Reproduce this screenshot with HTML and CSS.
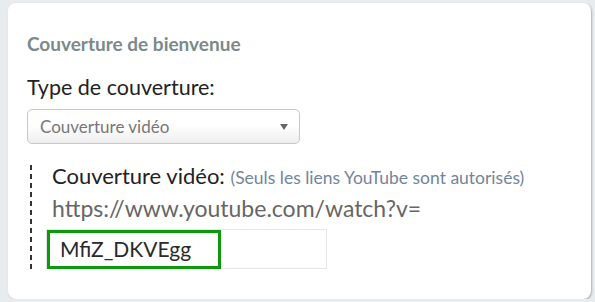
FILE: index.html
```html
<!DOCTYPE html>
<html lang="fr">
<head>
<meta charset="utf-8">
<link rel="stylesheet" href="styles.css">
</head>
<body>
<div class="card">
  <h3 class="card-title">Couverture de bienvenue</h3>
  <label class="field-label">Type de couverture:</label>
  <div class="select">
    <span class="select-value">Couverture vidéo</span>
    <span class="select-arrow"></span>
  </div>
  <div class="video-section">
    <div class="video-label">Couverture vidéo: <span class="hint">(Seuls les liens YouTube sont autorisés)</span></div>
    <div class="url-prefix">https://www.youtube.com/watch?v=</div>
    <div class="id-field">
      <div class="id-value">MfiZ_DKVEgg</div>
    </div>
  </div>
</div>
</body>
</html>
```
FILE: styles.css
```css
* { box-sizing: border-box; }
body {
  margin: 0;
  background: #e9ecee;
  font-family: Lato, "Open Sans", sans-serif;
}
.card {
  margin: 3px 0 0 8px;
  width: 583px;
  height: 296px;
  background: #fff;
  border-radius: 8px;
  box-shadow: 1px 1px 2px rgba(0,0,0,0.25);
  padding: 29px 0 0 19px;
}
.card-title {
  margin: 0;
  font-size: 19px;
  line-height: 24px;
  font-weight: 700;
  color: #7c898b;
}
.field-label {
  display: block;
  margin-top: 18px;
  font-size: 21.5px;
  line-height: 26px;
  color: #222;
}
.select {
  margin-top: 9px;
  width: 273px;
  height: 35px;
  border: 1px solid #c8c8c8;
  border-radius: 5px;
  background: linear-gradient(#fff 0%, #fff 45%, #eeeeee 100%);
  display: flex;
  align-items: center;
  justify-content: space-between;
  padding: 0 11px 0 12px;
}
.select-value {
  font-size: 17px;
  color: #777;
}
.select-arrow {
  width: 0;
  height: 0;
  border-left: 4px solid transparent;
  border-right: 4px solid transparent;
  border-top: 6px solid #666;
}
.video-section {
  margin: 21px 0 0 3px;
  padding: 0 0 0 22px;
  height: 107px;
  background: repeating-linear-gradient(to bottom, #333 0 5px, transparent 5px 9px) left top / 2px 100% no-repeat;
}
.video-label {
  font-size: 22px;
  line-height: 22px;
  color: #222;
  white-space: nowrap;
}
.hint {
  font-size: 17.5px;
  color: #72859a;
}
.url-prefix {
  margin-top: 7px;
  font-size: 23px;
  line-height: 24px;
  color: #666;
  white-space: nowrap;
}
.id-field {
  margin: 9px 0 0 -6px;
  width: 281px;
  height: 40px;
  border: 1px solid #e6e6e6;
  display: flex;
}
.id-value {
  margin: 0 0 -1px 0;
  width: 174px;
  border: 3px solid #0a9a0a;
  padding: 0 0 0 10px;
  font-size: 21px;
  line-height: 31px;
  color: #2a2a2a;
}
```
